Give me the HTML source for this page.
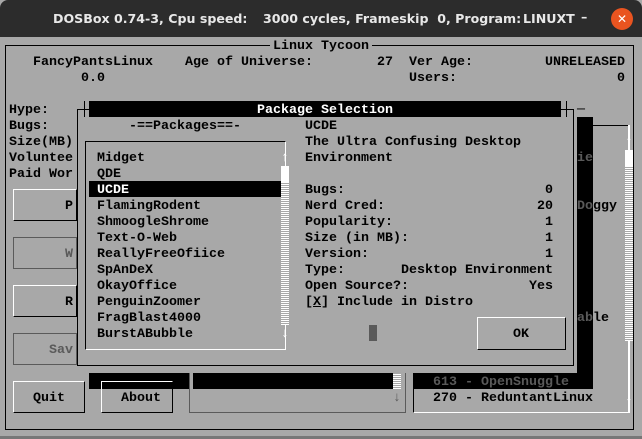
<!DOCTYPE html>
<html><head><meta charset="utf-8"><style>
*{margin:0;padding:0;box-sizing:border-box}
body{width:642px;height:439px;background:#a8a8a8;position:relative;overflow:hidden;font-family:"Liberation Mono",monospace;font-size:13.33px;font-weight:bold;color:#000}
#tb{position:absolute;left:0;top:0;width:642px;height:37px;background:#2c2c2c;border-radius:8px 8px 0 0;color:#e8e8e8;font-family:"DejaVu Sans","Liberation Sans",sans-serif;font-size:12.6px;font-weight:bold;}
#tb span{position:absolute;top:11px;white-space:pre}
.t{position:absolute;white-space:pre;line-height:16px;padding-top:2px}
.b{position:absolute}
.w{color:#fff}.g{color:#5a5a5a}
.r{text-align:right;width:120px}
</style></head><body>
<div id="tb"><span style="left:53px">DOSBox 0.74-3, Cpu speed:</span><span style="left:263px">3000 cycles, Frameskip  0, Program:</span><span style="left:523px">LINUXT</span>
<span style="left:581px;top:9px">–</span>
<div style="position:absolute;left:611px;top:8px;width:22px;height:22px;border-radius:50%;background:#e95420;color:#fff;text-align:center;line-height:22px;font-size:12px">✕</div></div>
<!-- outer frame -->
<div class="b" style="left:5px;top:45px;width:629px;height:385px;border:1px solid #000"></div>
<div class="b" style="left:0;top:436px;width:642px;height:3px;background:#777"></div>
<div class="t" style="left:270px;top:37px;background:#a8a8a8;padding-left:3px;padding-right:3px">Linux Tycoon</div>
<div class="t" style="left:33px;top:53px">FancyPantsLinux</div>
<div class="t" style="left:185px;top:53px">Age of Universe:</div>
<div class="t" style="left:377px;top:53px">27</div>
<div class="t" style="left:409px;top:53px">Ver Age:</div>
<div class="t" style="left:545px;top:53px">UNRELEASED</div>
<div class="t" style="left:81px;top:69px">0.0</div>
<div class="t" style="left:409px;top:69px">Users:</div>
<div class="t" style="left:617px;top:69px">0</div>
<div class="t" style="left:9px;top:101px">Hype:</div>
<div class="t" style="left:9px;top:117px">Bugs:</div>
<div class="t" style="left:9px;top:133px">Size(MB)</div>
<div class="t" style="left:9px;top:149px">Voluntee</div>
<div class="t" style="left:9px;top:165px">Paid Wor</div>
<!-- left buttons -->
<div class="b" style="left:13px;top:189px;width:64px;height:32px;border:1px solid #000;border-top-color:#fff;border-left-color:#fff"></div>
<div class="t" style="left:65px;top:197px">P</div>
<div class="b" style="left:13px;top:237px;width:64px;height:32px;border:1px solid #5a5a5a"></div>
<div class="t g" style="left:65px;top:245px">W</div>
<div class="b" style="left:13px;top:285px;width:64px;height:32px;border:1px solid #000;border-top-color:#fff;border-left-color:#fff"></div>
<div class="t" style="left:65px;top:293px">R</div>
<div class="b" style="left:13px;top:333px;width:64px;height:32px;border:1px solid #5a5a5a"></div>
<div class="t g" style="left:49px;top:341px">Sav</div>
<!-- right partial -->
<div class="b" style="left:593px;top:125px;width:36px;height:1px;background:#000"></div>
<div class="b" style="left:413px;top:373px;width:217px;height:40px;border-left:1px solid #000;border-bottom:1px solid #fff"></div>
<div class="b" style="left:628px;top:125px;width:2px;height:288px;background:#fff"></div>
<div class="b" style="left:625px;top:165px;width:8px;height:176px;background:repeating-linear-gradient(0deg,#fff 0 1px,#a8a8a8 1px 2px)"></div>
<div class="t w" style="left:625px;top:133px">↑</div>
<div class="b" style="left:625px;top:150px;width:8px;height:16px;background:#fff"></div>
<div class="t w" style="left:625px;top:389px">↓</div>
<div class="t" style="left:577px;top:101px">─</div>
<!-- bottom area -->
<div class="b" style="left:189px;top:373px;width:217px;height:40px;border-left:1px solid #5a5a5a;border-bottom:1px solid #5a5a5a;border-right:1px solid #5a5a5a"></div>
<div class="b" style="left:393px;top:373px;width:8px;height:16px;background:repeating-linear-gradient(0deg,#fff 0 1px,#a8a8a8 1px 2px)"></div>
<div class="t g" style="left:393px;top:389px">↓</div>
<!-- dialog shadow -->
<div class="b" style="left:577px;top:117px;width:16px;height:272px;background:#000"></div>
<div class="b" style="left:89px;top:373px;width:100px;height:16px;background:#000"></div>
<div class="b" style="left:193px;top:373px;width:200px;height:16px;background:#000"></div>
<div class="b" style="left:413px;top:373px;width:180px;height:16px;background:#000"></div>
<div class="t g" style="left:577px;top:149px">ie</div>
<div class="t" style="left:577px;top:197px"><span class="g">Do</span>ggy</div>
<div class="t" style="left:577px;top:309px"><span class="g">ab</span>le</div>
<div class="t g" style="left:433px;top:373px">613 - OpenSnuggle</div>
<div class="t" style="left:433px;top:389px">270 - ReduntantLinux</div>
<div class="b" style="left:13px;top:381px;width:72px;height:32px;border:1px solid #000;border-top-color:#fff;border-left-color:#fff"></div>
<div class="t" style="left:33px;top:389px">Quit</div>
<div class="b" style="left:101px;top:381px;width:72px;height:32px;border:1px solid #000;border-top-color:#fff;border-left-color:#fff"></div>
<div class="t" style="left:121px;top:389px">About</div>
<!-- dialog -->
<div class="b" style="left:77px;top:109px;width:497px;height:257px;background:#a8a8a8;border:1px solid #000"></div>
<div class="b" style="left:84px;top:101px;width:1px;height:16px;background:#000"></div>
<div class="b" style="left:566px;top:101px;width:1px;height:16px;background:#000"></div>
<div class="b" style="left:89px;top:101px;width:472px;height:16px;background:#000"></div>
<div class="t w" style="left:257px;top:101px">Package Selection</div>
<div class="t" style="left:129px;top:117px">-==Packages==-</div>
<div class="b" style="left:85px;top:141px;width:201px;height:209px;border:1px solid #fff;border-top-color:#000;border-left-color:#000"></div>
<div class="b" style="left:281px;top:181px;width:8px;height:144px;background:repeating-linear-gradient(0deg,#fff 0 1px,#a8a8a8 1px 2px)"></div>
<div class="t w" style="left:281px;top:149px">↑</div>
<div class="b" style="left:281px;top:166px;width:8px;height:16px;background:#fff"></div>
<div class="t w" style="left:281px;top:325px">↓</div>
<div class="b" style="left:89px;top:181px;width:192px;height:16px;background:#000"></div>
<div class="t" style="left:97px;top:149px">Midget
QDE
<span class="w">UCDE</span>
FlamingRodent
ShmoogleShrome
Text-O-Web
ReallyFreeOfiice
SpAnDeX
OkayOffice
PenguinZoomer
FragBlast4000
BurstABubble</div>
<div class="t" style="left:305px;top:117px">UCDE
The Ultra Confusing Desktop
Environment

Bugs:
Nerd Cred:
Popularity:
Size (in MB):
Version:
Type:
Open Source?:
[<u>X</u>] Include in Distro</div>
<div class="t r" style="left:433px;top:181px">0</div>
<div class="t r" style="left:433px;top:197px">20</div>
<div class="t r" style="left:433px;top:213px">1</div>
<div class="t r" style="left:433px;top:229px">1</div>
<div class="t r" style="left:433px;top:245px">1</div>
<div class="t r" style="left:393px;top:261px;width:160px">Desktop Environment</div>
<div class="t r" style="left:433px;top:277px">Yes</div>
<div class="b" style="left:369px;top:325px;width:8px;height:16px;background:#5a5a5a"></div>
<div class="b" style="left:477px;top:317px;width:89px;height:33px;border:1px solid #000;border-top-color:#fff;border-left-color:#fff"></div>
<div class="t" style="left:513px;top:325px">OK</div>
</body></html>
